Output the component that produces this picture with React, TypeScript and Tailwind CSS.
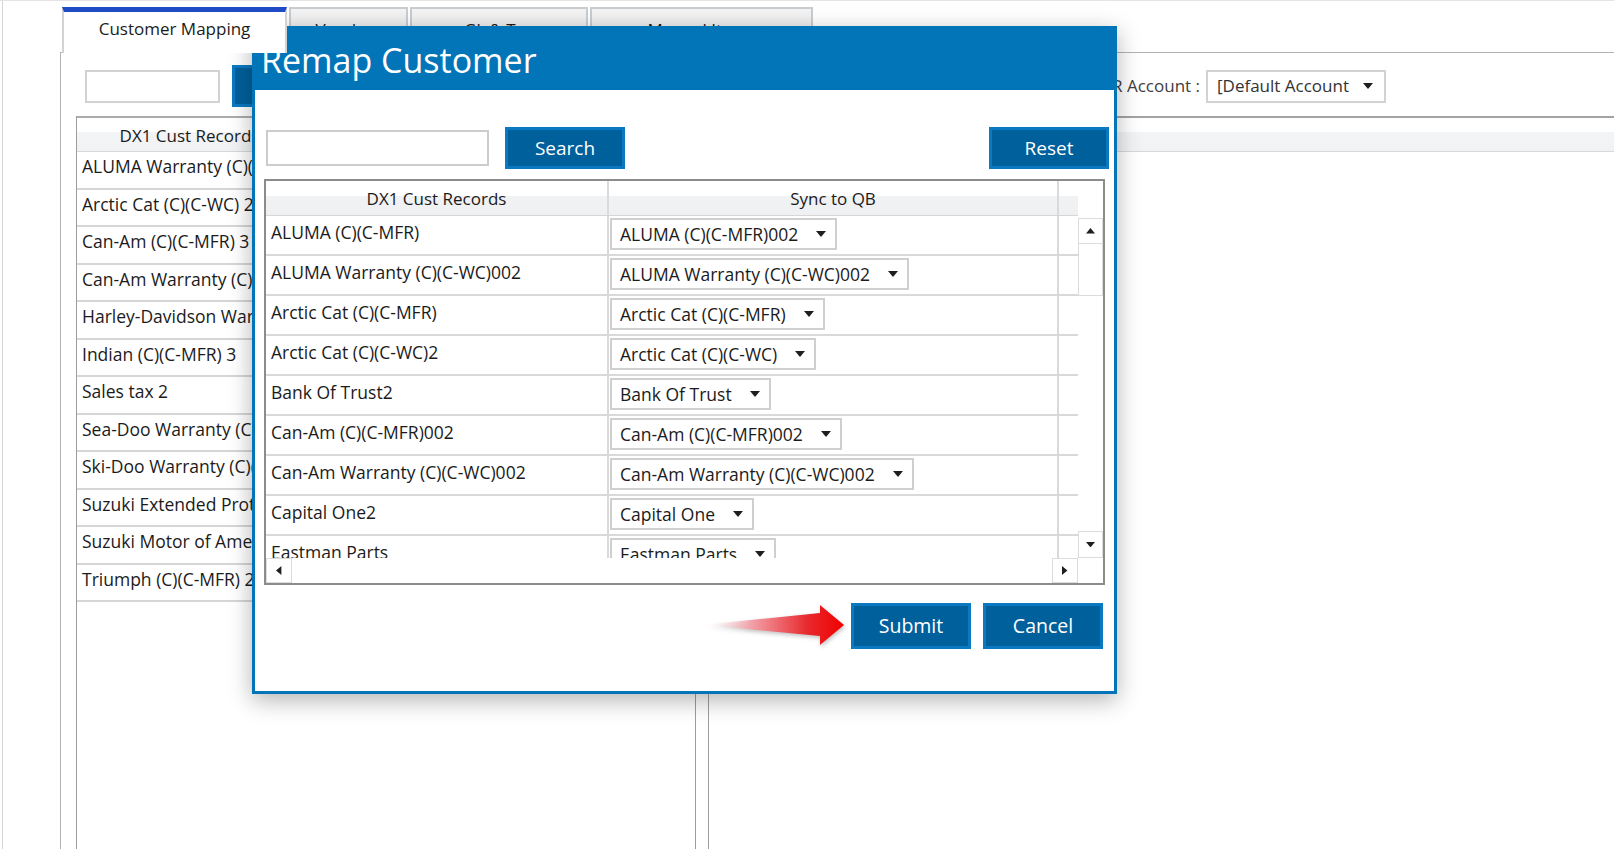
import React from 'react';

const leftRows = [
  'ALUMA Warranty (C)(C-WC) 2',
  'Arctic Cat (C)(C-WC) 2',
  'Can-Am (C)(C-MFR) 3',
  'Can-Am Warranty (C)(C-WC) 3',
  'Harley-Davidson Warranty (C)(C-WC) 2',
  'Indian (C)(C-MFR) 3',
  'Sales tax 2',
  'Sea-Doo Warranty (C)(C-WC) 2',
  'Ski-Doo Warranty (C)(C-WC) 2',
  'Suzuki Extended Protection (C) 2',
  'Suzuki Motor of America (C)(C-MFR) 2',
  'Triumph (C)(C-MFR) 2',
];

const remapRows = [
  { dx1: 'ALUMA (C)(C-MFR)', qb: 'ALUMA (C)(C-MFR)002' },
  { dx1: 'ALUMA Warranty (C)(C-WC)002', qb: 'ALUMA Warranty (C)(C-WC)002' },
  { dx1: 'Arctic Cat (C)(C-MFR)', qb: 'Arctic Cat (C)(C-MFR)' },
  { dx1: 'Arctic Cat (C)(C-WC)2', qb: 'Arctic Cat (C)(C-WC)' },
  { dx1: 'Bank Of Trust2', qb: 'Bank Of Trust' },
  { dx1: 'Can-Am (C)(C-MFR)002', qb: 'Can-Am (C)(C-MFR)002' },
  { dx1: 'Can-Am Warranty (C)(C-WC)002', qb: 'Can-Am Warranty (C)(C-WC)002' },
  { dx1: 'Capital One2', qb: 'Capital One' },
  { dx1: 'Eastman Parts', qb: 'Eastman Parts' },
  { dx1: 'Harley-Davidson (C)(C-MFR)', qb: 'Harley-Davidson (C)(C-MFR)' },
];

function Caret({ dir = 'down', size = 10 }: { dir?: 'down' | 'up' | 'left' | 'right'; size?: number }) {
  const pts = {
    down: '0,0 10,0 5,6',
    up: '0,6 10,6 5,0',
    left: '6,0 6,10 0,5',
    right: '0,0 0,10 6,5',
  }[dir];
  const vb = dir === 'down' || dir === 'up' ? '0 0 10 6' : '0 0 6 10';
  const w = dir === 'down' || dir === 'up' ? size : size * 0.6;
  const h = dir === 'down' || dir === 'up' ? size * 0.6 : size;
  return (
    <svg width={w} height={h} viewBox={vb} className="shrink-0">
      <polygon points={pts} fill="#1e1e1e" />
    </svg>
  );
}

function Combo({ value }: { value: string }) {
  return (
    <div className="inline-flex items-center h-[32px] border-2 border-[#cfcfcf] bg-white pl-[8px] pr-[9px] leading-[28px] whitespace-nowrap">
      <span>{value}</span>
      <span className="ml-[18px]">
        <Caret />
      </span>
    </div>
  );
}

function BlueButton({ label, className = '' }: { label: string; className?: string }) {
  return (
    <button
      className={`flex items-center justify-center border-[3px] border-[#0a79c2] bg-[#00609c] text-white ${className}`}
    >
      {label}
    </button>
  );
}

function RedArrow() {
  return (
    <svg width="146" height="46" viewBox="0 0 146 46" className="shrink-0 drop-shadow-[1px_2px_2px_rgba(0,0,0,0.25)]">
      <defs>
        <linearGradient id="arrowFade" x1="0" y1="0" x2="1" y2="0">
          <stop offset="0" stopColor="#ffffff" stopOpacity="0" />
          <stop offset="0.35" stopColor="#f2a0a8" />
          <stop offset="0.75" stopColor="#e8282c" />
          <stop offset="1" stopColor="#f00000" />
        </linearGradient>
      </defs>
      <polygon points="2,22 120,10 120,2 144,22 120,42 120,33" fill="url(#arrowFade)" />
    </svg>
  );
}

function RemapDialog() {
  return (
    <div className="absolute left-[252px] top-[25px] w-[865px] h-[668px] border-[3px] border-[#0274b8] bg-white flex flex-col shadow-[0_6px_22px_rgba(0,0,0,0.3)]">
      {/* Title bar */}
      <div className="h-[61px] bg-[#0274b8] text-white text-[34px] leading-[60px] pt-[1px] pl-[6px]">Remap Customer</div>

      {/* Toolbar */}
      <div className="flex items-center mt-[37px] pl-[11px] pr-[5px]">
        <input className="w-[223px] h-[36px] border-2 border-[#cccccc] outline-none" />
        <BlueButton label="Search" className="ml-[16px] w-[120px] h-[42px] text-[19px]" />
        <div className="flex-1" />
        <BlueButton label="Reset" className="w-[120px] h-[42px] text-[19px]" />
      </div>

      {/* Grid */}
      <div className="ml-[9px] mt-[10px] w-[841px] h-[406px] border-2 border-[#8c8c8c] flex flex-col">
        <div className="flex flex-1 min-h-0">
          <div className="w-[812px] flex flex-col overflow-hidden">
            <div className="flex h-[35px] shrink-0 border-b border-[#d6d6d6] bg-[linear-gradient(to_bottom,#ffffff_0px,#ffffff_15px,#f1f2f4_15px,#eef0f2_100%)]">
              <div className="w-[343px] border-r-2 border-[#dadada] text-center pt-[7px] leading-[22px]">DX1 Cust Records</div>
              <div className="w-[450px] border-r-2 border-[#dadada] text-center pt-[7px] leading-[22px]">Sync to QB</div>
              <div className="w-[19px]" />
            </div>
            <div className="flex-1 overflow-hidden text-[17.5px]">
              {remapRows.map((r) => (
                <div key={r.dx1} className="flex h-[40px] border-b-2 border-[#d9d9d9]">
                  <div className="w-[343px] border-r-2 border-[#dadada] pl-[5px] pt-[5px] leading-[22px] whitespace-nowrap overflow-hidden">
                    {r.dx1}
                  </div>
                  <div className="w-[450px] border-r-2 border-[#dadada] pl-[1px] pt-[2px]">
                    <Combo value={r.qb} />
                  </div>
                  <div className="w-[19px]" />
                </div>
              ))}
            </div>
          </div>

          {/* Vertical scrollbar */}
          <div className="w-[25px] flex flex-col">
            <div className="h-[37px] shrink-0" />
            <div className="flex-1 flex flex-col">
              <div className="h-[26px] flex items-center justify-center border border-[#dcdcdc]">
                <Caret dir="up" size={9} />
              </div>
              <div className="h-[52px] border-x border-b border-[#dcdcdc]" />
              <div className="flex-1" />
              <div className="h-[27px] flex items-center justify-center border border-[#dcdcdc]">
                <Caret dir="down" size={9} />
              </div>
            </div>
          </div>
        </div>

        {/* Horizontal scrollbar */}
        <div className="h-[25px] flex shrink-0">
          <div className="w-[812px] flex">
            <div className="w-[26px] flex items-center justify-center border border-[#dcdcdc]">
              <Caret dir="left" size={9} />
            </div>
            <div className="flex-1" />
            <div className="w-[26px] flex items-center justify-center border border-[#dcdcdc]">
              <Caret dir="right" size={9} />
            </div>
          </div>
          <div className="flex-1" />
        </div>
      </div>

      {/* Footer */}
      <div className="flex items-center justify-end mt-[18px] pr-[11px]">
        <div className="mr-[5px]">
          <RedArrow />
        </div>
        <BlueButton label="Submit" className="w-[120px] h-[46px] text-[19.5px]" />
        <BlueButton label="Cancel" className="ml-[12px] w-[120px] h-[46px] text-[19.5px]" />
      </div>
    </div>
  );
}

function GridHeader({ children }: { children?: React.ReactNode }) {
  return (
    <div className="flex h-[34px] shrink-0 border-b border-[#d8d8d8] bg-[linear-gradient(to_bottom,#ffffff_0px,#ffffff_14px,#f3f4f6_14px,#f1f2f4_100%)]">
      {children}
    </div>
  );
}

export default function App() {
  return (
    <div className="relative w-[1614px] h-[849px] overflow-hidden bg-white border-t border-[#e4e4e4] font-['Open_Sans',sans-serif] text-[17px] text-[#1b1b1b]">
      <div className="ml-[2px] h-full border-l border-[#d6d6d6] flex flex-col">
        {/* Tabs */}
        <div className="flex items-start gap-[2px] ml-[59px] mt-[6px] h-[45px] shrink-0">
          <div className="relative z-10 w-[225px] h-[46px] border-t-[5px] border-t-[#1f4cc4] border-x-2 border-x-[#d3d3d3] bg-white text-center pt-[6px] leading-[22px]">
            Customer Mapping
          </div>
          {[
            { label: 'Vendors', w: 'w-[119px]' },
            { label: 'GL & Tax', w: 'w-[178px]' },
            { label: 'Manual Items', w: 'w-[223px]' },
          ].map((t) => (
            <div
              key={t.label}
              className={`${t.w} h-[45px] border-2 border-b-0 border-[#c8cdd2] bg-[linear-gradient(to_bottom,#f4f4f4,#e6e6e6)] text-center pt-[10px] leading-[22px]`}
            >
              {t.label}
            </div>
          ))}
        </div>

        {/* Panel */}
        <div className="ml-[57px] flex-1 min-h-0 border-l border-t border-[#b3b3b3] flex">
          {/* Left section */}
          <div className="pl-[15px] flex flex-col">
            <div className="h-[63px] pt-[3px] flex items-center shrink-0">
              <input className="ml-[9px] w-[135px] h-[33px] border-2 border-[#d2d2d2] outline-none" />
              <BlueButton label="Search" className="ml-[12px] w-[120px] h-[42px] text-[19px]" />
            </div>
            <div className="w-[620px] flex-1 border-x border-x-[#9d9d9d] border-t-2 border-t-[#ababab] flex flex-col">
              <GridHeader>
                <div className="w-[225px] text-center pt-[7px] leading-[22px] whitespace-nowrap">DX1 Cust Records</div>
                <div className="flex-1 text-center pt-[7px] leading-[22px]">Sync to QB</div>
              </GridHeader>
              {leftRows.map((name) => (
                <div key={name} className="h-[37.5px] shrink-0 border-b-2 border-[#d6d6d6] pl-[5px] pt-[3px] leading-[22px] text-[17.5px] whitespace-nowrap overflow-hidden">
                  {name}
                </div>
              ))}
            </div>
          </div>

          {/* Right section */}
          <div className="ml-[12px] flex-1 flex flex-col">
            <div className="h-[63px] pt-[3px] flex items-center shrink-0">
              <div className="w-[492px] text-right text-[#404040] whitespace-nowrap">Default A/R Account :</div>
              <div className="ml-[6px] w-[180px] h-[33px] border-2 border-[#d2d2d2] flex items-center pl-[9px] pr-[11px] text-[#333]">
                <span className="flex-1 whitespace-nowrap">[Default Account</span>
                <Caret size={10} />
              </div>
            </div>
            <div className="flex-1 border-l border-l-[#9d9d9d] border-t-2 border-t-[#a3a3a3] flex flex-col">
              <GridHeader />
            </div>
          </div>
        </div>
      </div>

      <RemapDialog />
    </div>
  );
}
